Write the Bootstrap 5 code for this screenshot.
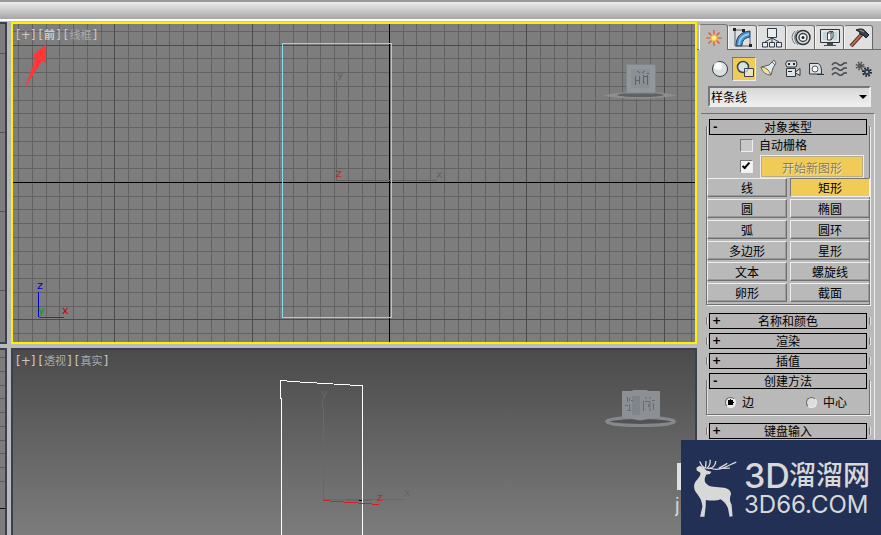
<!DOCTYPE html>
<html lang="zh-CN">
<head>
<meta charset="utf-8">
<meta name="viewport" content="width=device-width, initial-scale=1">
<title>3D 视图与创建面板</title>
<link href="https://cdn.jsdelivr.net/npm/bootstrap@5.3.0/dist/css/bootstrap.min.css" rel="stylesheet">
<style>
:root{--face:#b9b9b9;--hi:#e6e6e6;--lo:#707070;--gold:#f0cb57}
body{background:var(--face);font:12px/16px "Liberation Sans","Noto Sans CJK SC",sans-serif;color:#000}
.topbar{height:22px;border-top:2px solid #9a9a9a;background:linear-gradient(#ededed,#a6a6a6 17px,#fff 17px,#fff 19px,#c0c0ca 19px)}
.workspace{min-height:0}
.edge-strip{width:7px}
.edge-view{background:#7d7d7d;border-right:2px solid #39404e;border-top:2px solid #39404e;border-bottom:2px solid #39404e}
.views{background:#bbb;gap:4px;min-width:0}
.strip-col{gap:4px;margin-right:4px}
.upper{flex:322 1 0}.lower{flex:187 1 0}
.view{overflow:hidden;min-height:0}
.view.upper{border:2px solid #ffef00;background:#7d7d7d}
.view.lower{border:2px solid #39404e;border-bottom:0;background:linear-gradient(#4b4b4b,#7c7c7c)}
.view>svg{position:absolute;inset:0;width:100%;height:100%}
.view-menu{position:relative;z-index:1;padding:2px 3px;gap:3px}
.view-menu button{border:0;background:none;padding:0;color:#c8c8c8;font:12px/16px "DejaVu Sans","Noto Sans CJK SC",sans-serif}
.view-menu span{font-size:11px;color:#aaa;font-family:"Noto Sans CJK SC",sans-serif;padding:0 1px}
.view-menu .bright{color:#ccc;font-weight:700}
svg text{font-family:"DejaVu Sans",sans-serif;font-size:11px}
.panel{width:184px;background:var(--face)}
.tabs{height:28px;padding:2px 8px 0 2px;border-bottom:1px solid #6b6b6b}
.tabs button{flex:1 1 0;border:1px solid #666;border-top-color:#777;border-left-color:#f5f5f5;border-bottom:0;background:#e0e0e0;border-radius:3px 3px 0 0;height:24px;margin-top:1px;padding:0}
.tabs button.on{background:var(--face);height:26px;margin-top:0}
.tabs svg,.kinds svg{display:block;margin:auto}
.kinds{padding:7px 6px 0 11px}
.kinds button{border:1px solid transparent;background:none;padding:0;width:24px;height:24px}
.kinds button.on{background:var(--gold);border-color:#777 #eee #eee #777}
.shape-select{margin:5px 10px 0 11px;height:21px;position:relative}
.shape-select select{width:100%;height:21px;border:2px solid;border-color:#777 #eee #eee #777;border-radius:0;padding:0 1px;font:12px/16px "Noto Sans CJK SC",sans-serif;background:linear-gradient(#d8d8d8,#eee);appearance:none;color:#000}
.shape-select::after{content:"";position:absolute;right:4px;top:9px;border:4px solid transparent;border-top-color:#000;border-bottom:0;pointer-events:none}
.rollups{margin:6px 6px 0 4px;border-top:1px solid var(--lo);border-right:1px solid #eee;padding:5px 4px 0 5px}
.rollup{position:relative;margin-bottom:4px}
.rollup::before{content:"";position:absolute;inset:4px 0;border:1px solid var(--lo);border-top-color:transparent;border-bottom-color:transparent;box-shadow:inset 1px 0 #e6e6e6,1px 0 #e6e6e6}
.rollup.open{margin-bottom:8px}
.rollup.open::before{inset:7px 0 0;border:1px solid var(--lo);border-top:0;box-shadow:inset 1px 0 #ddd,1px 1px #eee}
.rollup>*{position:relative}
.rolltitle{display:block;width:calc(100% - 6px);margin:0 3px;height:16px;border:1px solid #000;background:#b6b4b5;padding:0;font:12px/14px "Noto Sans CJK SC",sans-serif;color:#000}
.rolltitle::before{content:"+";position:absolute;left:2px;top:0;font:bold 11px/14px "DejaVu Sans",sans-serif}
.open>.rolltitle::before{content:"-";left:3px}
.opts label,.radios label{font-family:"Noto Sans CJK SC",sans-serif;line-height:18px}
.opts{padding:1px 6px 0 34px}
.opt-row{gap:6px}
.opt-row + .opt-row{gap:7px;margin-top:1px}
.opts input{appearance:none;flex:none;margin:0;width:13px;height:13px;border:1px solid;border-color:#777 #eee #eee #777;background:#c8c8c8}
.opts input:checked{background:#f4f4f4;position:relative}
.opts input:checked::after{content:"";position:absolute;left:3px;top:0;width:4px;height:8px;border:solid #000;border-width:0 2px 2px 0;transform:rotate(42deg)}
.tool{border:1px solid;border-color:#eee #707070 #707070 #eee;box-shadow:inset -1px -1px #999;background:var(--face);padding:0;height:19px;font:12px/16px "Noto Sans CJK SC",sans-serif;color:#000}
.tool.on{background:var(--gold);border-color:#777 #eee #eee #777;box-shadow:none}
.tool.start{height:23px;padding-top:2px;color:#887b57;text-shadow:1px 1px #f5e5ae;background:var(--gold);border-color:#eee #eee #ddd #eee;box-shadow:inset 0 0 0 1px #b8ac82}
.tools{display:grid;grid-template-columns:1fr 1fr;gap:2px 3px;padding:0 0 3px 1px}
.radios{padding:4px 23px 4px 19px}
.radios label{gap:6px}
.radios input{appearance:none;margin:0;width:11px;height:11px;border-radius:50%;border:1px solid;border-color:#666 #eee #eee #666;background:#ddd}
.radios input:checked{background:radial-gradient(circle,#000 0 3px,#eee 3px)}
.brand{position:absolute;right:0;bottom:0;width:200px;height:95px;background:#223056;color:#d8d8d8;padding:17px 10px 0 11px}
.brand-text{padding-left:5px}
.brand-top{font:500 27px/38px "Liberation Sans","Noto Sans CJK SC",sans-serif;height:36px}
.brand-top b{font:500 34px/38px Inter,sans-serif;width:45px}
.brand-sub{font:400 24px/24px Inter,sans-serif}
.brand-peek{position:absolute;right:200px;bottom:0;width:6px;height:95px;overflow:hidden;color:#d8d8d8}
.brand-peek i{display:block;width:4px;height:27px;margin:23px 0 0 2px;background:#e0e0e0}
.brand-peek em{display:block;font:20px/30px "Liberation Sans",sans-serif}
</style>
<script src="https://cdn.jsdelivr.net/npm/bootstrap@5.3.0/dist/js/bootstrap.bundle.min.js"></script>
</head>
<body>
<div class="d-flex flex-column vh-100 overflow-hidden position-relative">
<header class="topbar flex-shrink-0"></header>
<main class="workspace d-flex flex-grow-1">
  <div class="edge-strip strip-col d-flex flex-column flex-shrink-0">
    <div class="edge-view upper overflow-hidden"><svg class="d-block" width="5" height="320" shape-rendering="crispEdges" stroke="#555"><path d="M0 29.500H5M0 108.500H5M0 187.500H5M0 266.500H5"/></svg></div>
    <div class="edge-view lower overflow-hidden border-bottom-0"><svg class="d-block" width="5" height="187" shape-rendering="crispEdges" stroke="#5b5b5b"><path d="M0 7.500H5M0 21.500H5M0 35.500H5M0 48.500H5M0 62.500H5M0 76.500H5M0 90.500H5M0 103.500H5M0 117.500H5M0 131.500H5"/><path stroke="#111" d="M0 158.500H5"/></svg></div>
  </div>
  <section class="views d-flex flex-column flex-grow-1">
    <div class="view upper position-relative">
      <nav class="view-menu d-flex"><button>[+]</button><button>[<span class="bright">前</span>]</button><button>[<span>线框</span>]</button></nav>
      <svg aria-hidden="true"><g transform="translate(-13 -24)">
        <g shape-rendering="crispEdges" fill="none"><path id="minor" stroke="#626262"/><path id="major" stroke="#4b4b4b"/><path stroke="#000" d="M13 182.500H4000M389.500 24V4000"/>
        <path stroke="#626262" d="M336.500 81V180.500H437"/><path stroke="#86dbe6" d="M282.500 43.500H391.500V317.500H282.500Z"/>
        <path stroke="#0000c8" d="M38.500 292V317"/><path stroke="#c80000" d="M39 317.500H64"/></g>
        <text x="337" y="78" fill="#646464">y</text><text x="436" y="178" fill="#646464">x</text><text x="336" y="177" fill="#d02020">z</text>
        <text x="37" y="289" fill="#0000c8">z</text><text x="38" y="314" fill="#00a000">y</text><text x="62" y="314" fill="#c80000">x</text>
        <path fill="#ff3737" d="M46 44L32 56L35.500 58L25 87.500L42 61L46 63Z"/>
        <path fill="#8b8f94" d="M603 95.500L614 93.500L627 92H655L667 93.500L677 95.500L667 97L650 98.500H630L614 97.500Z"/><ellipse cx="640.500" cy="95" rx="23" ry="2" fill="#5f6264"/>
        <path fill="#92979c" stroke="#7f858d" d="M626.500 64.500H655.500V93H626.500Z"/><path fill="#8b9096" d="M631 69H650V88H631Z"/><path stroke="#5b626b" fill="none" d="M637 71L640 73M645 71L642 73M647 73.500H649M635.500 76V85M639.500 76V84M635 80.500H639M643.500 75V83H645M647.500 75V85M643 76.500H647"/>
      </g></svg>
    </div>
    <div class="view lower position-relative">
      <nav class="view-menu d-flex"><button>[+]</button><button>[<span>透视</span>]</button><button>[<span>真实</span>]</button></nav>
      <svg aria-hidden="true"><g transform="translate(-13 -350)" fill="none">
        <path stroke="#686868" shape-rendering="crispEdges" d="M322.500 400V407M323.500 407V500L346 499.500H404"/>
        <path stroke="#666" stroke-width="2" d="M346 500H372"/><path stroke="#000" d="M359 500.500H362"/>
        <path stroke="#fff" shape-rendering="crispEdges" d="M281.500 541V398.500L280.500 398V380.500L300 382L325 383.500L350 385L362.500 385.500V541"/>
        <path stroke="#d02020" shape-rendering="crispEdges" d="M323 500.500L379 504.500"/>
        <g stroke="none"><text x="321" y="397" fill="#666">y</text><text x="404" y="496" fill="#666">x</text><text x="377" y="501" fill="#d02020">z</text></g>
        <ellipse cx="640.500" cy="421.500" rx="34" ry="4" fill="#505254" stroke="#85898d" stroke-width="3"/>
        <path fill="#8c9095" d="M622 391H631L634 390H646L649 391H660V417L640 420.500L622 417Z"/><path fill="#7f848a" d="M632 396H640V415H632Z"/>
        <path stroke="#666c73" d="M627.500 397V402M625 405.500H628M629.500 398V401M629.500 404V411M631 400.500H633M627 410.500H631M643.500 401V411M645 401.500H650V411M648.500 404V407M652 400.500H655M653.500 403V410M645 397L647 399M651 397L649 399"/>
      </g></svg>
    </div>
  </section>
  <aside class="panel flex-shrink-0 overflow-hidden">
    <div class="tabs d-flex">
      <button class="on" aria-label="创建"><svg width="20" height="20" viewBox="0 0 20 20"><path stroke="#dc542b" stroke-width="1.200" d="M10 2V18M2 10H18M4.500 4.500L15.500 15.500M15.500 4.500L4.500 15.500"/><circle cx="10" cy="10" r="3.500" fill="#ffbd37"/><circle cx="10" cy="10" r="2" fill="#fff7a8"/></svg></button>
      <button aria-label="修改"><svg width="22" height="22" viewBox="0 0 22 22"><path d="M4 19C4 9 9 5 18 4V10C12 11 10 14 10 19Z" fill="#448cc3" stroke="#244663"/><path d="M7 18C7 11 11 8 17 7" fill="none" stroke="#91c9ee" stroke-width="2"/><path d="M3 3V19H18M3 3H11M18 10V19" fill="none" stroke="#5b6065"/><path fill="#222" d="M1 1H4V4H1ZM10 2H13V5H10ZM17 17H20V20H17Z"/></svg></button>
      <button aria-label="层次"><svg width="22" height="22" viewBox="0 0 22 22"><g fill="#e7ecef" stroke="#343b43"><path fill="none" d="M11 10V15M4 15L11 11L18 15"/><path d="M6.500 1.500H15.500V10.500H6.500ZM1.500 15.500H6.500V20H1.500ZM8.500 15.500H13.500V20H8.500ZM15.500 15.500H20.500V20H15.500Z"/></g></svg></button>
      <button aria-label="运动"><svg width="22" height="22" viewBox="0 0 22 22"><path d="M5 4Q-1 10 5 17M8 3Q1 10 8 18" fill="none" stroke="#737980"/><circle cx="13" cy="10.500" r="7" fill="#d7dde1" stroke="#2c3137" stroke-width="1.500"/><circle cx="13" cy="10.500" r="4" fill="#f4f4f4" stroke="#40464d" stroke-width="1.500"/><circle cx="13" cy="10.500" r="1.500" fill="#222"/></svg></button>
      <button aria-label="显示"><svg width="22" height="22" viewBox="0 0 22 22"><path d="M1.500 2.500H20.500V15.500H1.500Z" fill="#dfe6e9" stroke="#2d333a"/><path d="M4 5H18V13H4Z" fill="#c9d3da"/><path d="M8.500 6L10 4.500H14V10L12 13H8.500ZM8.500 6H12V13M12 6L14 4.500" fill="#fff" stroke="#39424a"/><path d="M8 16H14V18H17V19H5V18H8Z" fill="#404851"/></svg></button>
      <button aria-label="工具"><svg width="22" height="22" viewBox="0 0 22 22"><path d="M3 19L14 7" stroke="#53251f" stroke-width="4"/><path d="M3 19L14 7" stroke="#b66b51" stroke-width="2"/><path d="M8 3C13 1 16 2 18 5L21 8L18 11L15 8L12 7C12 5 10 4 8 3Z" fill="#394149" stroke="#171d22"/><path d="M12 3L16 5" stroke="#93a1ab"/></svg></button>
    </div>
    <div class="kinds d-flex">
      <button aria-label="几何体"><svg width="20" height="20"><circle cx="10" cy="10" r="7.500" fill="#dce0e2" stroke="#343a40"/><circle cx="8" cy="7" r="4" fill="#fff" opacity=".8"/></svg></button>
      <button class="on" aria-label="图形"><svg width="22" height="22"><circle cx="10" cy="9" r="5.500" fill="#d8e1e4" stroke="#39434c" stroke-width="1.500"/><path d="M11.500 10.500H20.500V18.500H11.500Z" fill="#e8edf1" fill-opacity=".7" stroke="#39434c"/></svg></button>
      <button aria-label="灯光"><svg width="22" height="22"><path d="M12 7L17 2L19 5L16 10L14 17Q7 16 4 9Z" fill="#e3e8ea" stroke="#555e66"/><path d="M4 9Q11 9 14 17Q6 17 4 9Z" fill="#f6dda0" stroke="#76705e"/><path d="M15 4L18 7" stroke="#697178"/></svg></button>
      <button aria-label="摄影机"><svg width="22" height="22"><g fill="#dce2e5" stroke="#30373d"><path d="M6 3H15Q17 6 15 9H6Q3 6 6 3Z"/><path d="M5.500 10.500H14.500V18.500H5.500ZM14.500 14L19 10.500V17.500L14.500 15Z"/></g><path fill="#222" d="M7 5H9V7H7ZM12 5H14V7H12ZM7 13H11V14H7Z"/></svg></button>
      <button aria-label="辅助对象"><svg width="20" height="20"><path d="M3.500 4.500H12Q16 6 15.500 15H3.500ZM11 15.500H18" fill="#dce2e5" stroke="#30373d"/><circle cx="9" cy="10" r="3" fill="#fff" stroke="#555"/></svg></button>
      <button aria-label="空间扭曲"><svg width="20" height="20" fill="none" stroke="#424a51" stroke-width="1.500"><path d="M3 6Q6 2 9 5T15 4L18 4M3 11Q6 7 9 10T15 9L18 9M3 16Q6 12 9 15T15 14L18 14"/></svg></button>
      <button aria-label="系统"><svg width="20" height="20" fill="none"><circle cx="7" cy="7" r="3" stroke="#555" stroke-width="3" stroke-dasharray="1.200 1.200"/><circle cx="7" cy="7" r="2.500" fill="#555"/><circle cx="14" cy="13" r="3.500" stroke="#20253a" stroke-width="3" stroke-dasharray="1.500 1.200"/><circle cx="14" cy="13" r="2" stroke="#343d54" stroke-width="2" fill="#ddd"/></svg></button>
    </div>
    <div class="shape-select"><select aria-label="类别"><option>样条线</option></select></div>
    <div class="rollups">
      <section class="rollup open"><button class="rolltitle">对象类型</button>
        <div class="opts">
          <div class="opt-row d-flex align-items-center"><input type="checkbox" id="autogrid"><label for="autogrid">自动栅格</label></div>
          <div class="opt-row d-flex align-items-center"><input type="checkbox" checked aria-label="开始新图形"><button class="tool start flex-grow-1">开始新图形</button></div>
        </div>
        <div class="tools"><button class="tool">线</button><button class="tool on">矩形</button><button class="tool">圆</button><button class="tool">椭圆</button><button class="tool">弧</button><button class="tool">圆环</button><button class="tool">多边形</button><button class="tool">星形</button><button class="tool">文本</button><button class="tool">螺旋线</button><button class="tool">卵形</button><button class="tool">截面</button></div>
      </section>
      <section class="rollup"><button class="rolltitle">名称和颜色</button></section>
      <section class="rollup"><button class="rolltitle">渲染</button></section>
      <section class="rollup"><button class="rolltitle">插值</button></section>
      <section class="rollup open"><button class="rolltitle">创建方法</button>
        <div class="radios d-flex justify-content-between"><label class="d-flex align-items-center"><input type="radio" name="method" checked>边</label><label class="d-flex align-items-center"><input type="radio" name="method">中心</label></div>
      </section>
      <section class="rollup"><button class="rolltitle">键盘输入</button></section>
    </div>
  </aside>
</main>
<div class="brand-peek" aria-hidden="true"><i></i><em>j</em></div>
<div class="brand d-flex">
  <svg class="flex-shrink-0" width="47" height="62" viewBox="65 80 140 185" aria-hidden="true"><path fill="#d8d8d8" d="M78 112L88 106L100 112L108 120L123 124L118 131L108 132C102 142 100 152 108 160C118 172 140 168 160 172C172 174 182 180 181 192C176 206 178 212 183 222L186 257L177 258L172 232C168 222 160 212 150 206C135 212 118 210 106 208L106 225L102 258L89 258L96 228C95 212 88 200 80 190C68 176 68 160 80 148C88 138 92 132 89 126L79 120Z"/><path d="M103 114C85 101 94 96 87 94M105 114C105 104 108 98 106 92M108 115C122 103 119 96 119 88M112 114C128 116 135 103 136 92M118 112C145 126 170 106 197 95M145 114C153 108 162 106 170 99M155 114L178 113" fill="none" stroke="#d8d8d8" stroke-width="4"/></svg>
  <div class="brand-text flex-grow-1 text-nowrap"><div class="brand-top d-flex"><b>3D</b>溜溜网</div><div class="brand-sub">3D66.COM</div></div>
</div>
</div>
<script>
// Home grid: ten fine cells between heavy lines, measured outward from the origin axes.
const step = 13.73, ox = 389, oy = 182;
let minor = '', major = '';
for (let i = -28; i < 220; i++) {
  const x = Math.round(ox + i * step) + .5, y = Math.round(oy + i * step) + .5;
  const d = (x > 13 ? `M${x} 24V4000` : '') + (y > 24 ? `M13 ${y}H4000` : '');
  if (i % 10) minor += d; else major += d;
}
document.getElementById('minor').setAttribute('d', minor);
document.getElementById('major').setAttribute('d', major);
</script>
</body>
</html>
